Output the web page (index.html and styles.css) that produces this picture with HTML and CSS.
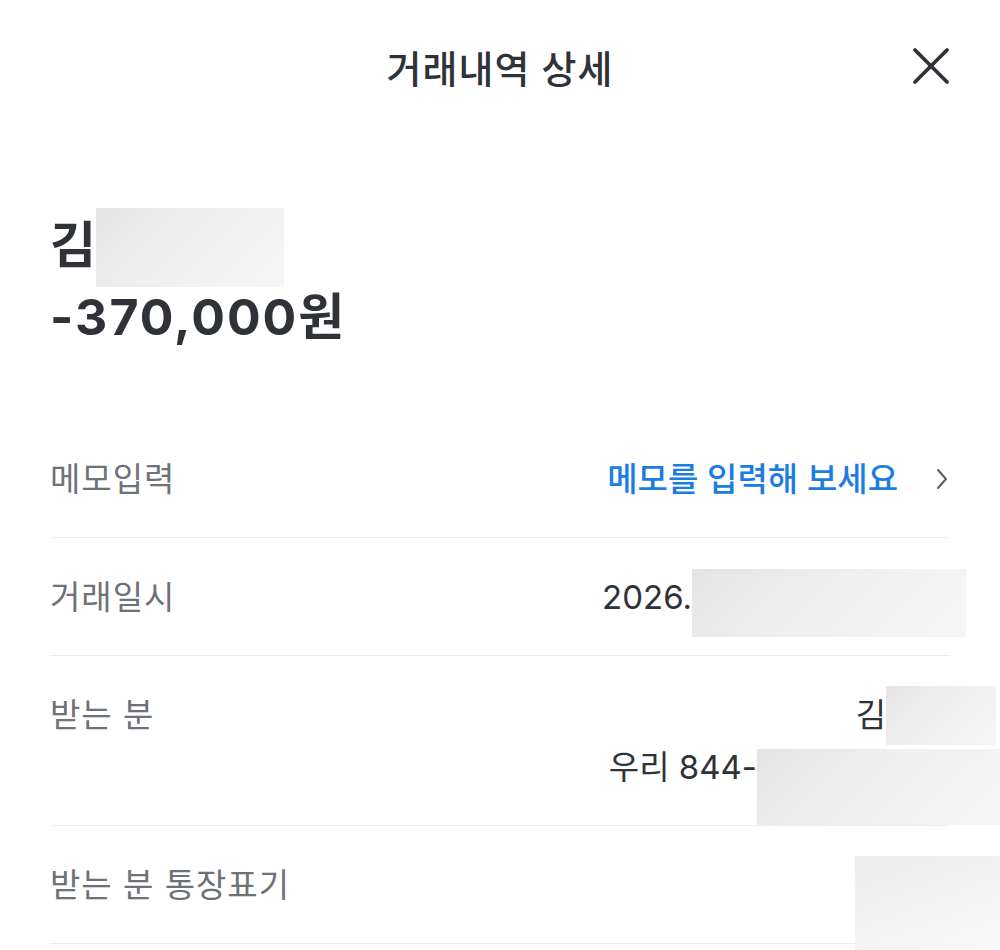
FILE: index.html
```html
<!DOCTYPE html>
<html lang="ko">
<head>
<meta charset="utf-8">
<title>거래내역 상세</title>
<link rel="stylesheet" href="styles.css">
</head>
<body>
<div class="page">
  <header class="topbar">
    <span></span>
    <h1 class="title">거래내역 상세</h1>
    <button class="close" aria-label="닫기">
      <svg width="38" height="38" viewBox="0 0 38 38"><path d="M3 3 L35 35 M35 3 L3 35" stroke="#2f3237" stroke-width="3.8" stroke-linecap="round" fill="none"/></svg>
    </button>
  </header>

  <section class="summary">
    <div class="name">김<span class="redact redact-name"></span></div>
    <div class="amount">-370,000원</div>
  </section>

  <ul class="details">
    <li class="row">
      <span class="label">메모입력</span>
      <span class="value memo">메모를 입력해 보세요
        <svg class="chev" width="12" height="22" viewBox="0 0 12 22"><path d="M2 2 L10 11 L2 20" stroke="#5a5d62" stroke-width="2" fill="none" stroke-linecap="round" stroke-linejoin="round"/></svg>
      </span>
    </li>
    <li class="row">
      <span class="label">거래일시</span>
      <span class="value line">2026.<span class="redact redact-date"></span></span>
    </li>
    <li class="row">
      <span class="label">받는 분</span>
      <span class="value multi">
        <span class="line">김<span class="redact redact-recv"></span></span>
        <span class="line">우리 844-<span class="redact redact-acct"></span></span>
      </span>
    </li>
    <li class="row last">
      <span class="label">받는 분 통장표기</span>
      <span class="redact redact-memo"></span>
    </li>
  </ul>
</div>
</body>
</html>
```

FILE: styles.css
```css
* { box-sizing: border-box; }
html, body { margin: 0; padding: 0; background: #ffffff; }
body {
  font-family: "Inter", "Noto Sans CJK KR", "Noto Sans", sans-serif;
  color: #2f3237;
  overflow: hidden;
}
.page { width: 1000px; height: 950px; }

.topbar {
  height: 132px;
  display: grid;
  grid-template-columns: 1fr auto 1fr;
  align-items: center;
  padding: 0 50px;
}
.title {
  margin: 0;
  font-size: 38px;
  font-weight: 500;
  letter-spacing: 1px;
  color: #2f3237;
}
.close {
  justify-self: end;
  border: 0;
  background: none;
  padding: 0;
  width: 38px;
  height: 38px;
  display: flex;
}

.summary {
  padding: 77px 50px 0;
  margin-bottom: 67px;
}
.name, .amount {
  font-size: 50px;
  font-weight: 700;
  line-height: 72px;
  height: 72px;
}
.amount { letter-spacing: 2px; }
.name { display: flex; align-items: flex-start; }

.redact {
  display: block;
  flex: none;
  background: linear-gradient(135deg, #e4e4e5 0%, #efeff0 45%, #f6f6f6 100%);
}
.redact-name { width: 188px; height: 79px; margin-top: -1px; }

.details { list-style: none; margin: 0; padding: 0 50px; }
.row {
  position: relative;
  display: flex;
  justify-content: space-between;
  align-items: flex-start;
  padding: 33px 0 32px;
  border-bottom: 1px solid #ececec;
  line-height: 52px;
  font-size: 33px;
}
.label { color: #6e7176; letter-spacing: 1px; }
.value { color: #2f3237; }
.memo {
  color: #1b7de3;
  font-weight: 500;
  display: flex;
  align-items: center;
  letter-spacing: 0;
}
.chev { margin-left: 38px; margin-right: 2px; }

.line { display: flex; align-items: flex-start; height: 52px; }
.multi { display: flex; flex-direction: column; align-items: flex-end; }

.redact-date { width: 274px; height: 68px; margin-top: -2px; margin-right: -16px; }
.redact-recv { width: 110px; height: 59px; margin-top: -3px; margin-right: -46px; }
.redact-acct { width: 243px; height: 76px; margin-top: 8px; margin-right: -50px; }
.redact-memo {
  position: absolute;
  right: -50px;
  top: 30px;
  width: 145px;
  height: 100px;
  background: linear-gradient(160deg, #ececec 0%, #f4f4f4 60%, #f9f9f9 100%);
}
```
